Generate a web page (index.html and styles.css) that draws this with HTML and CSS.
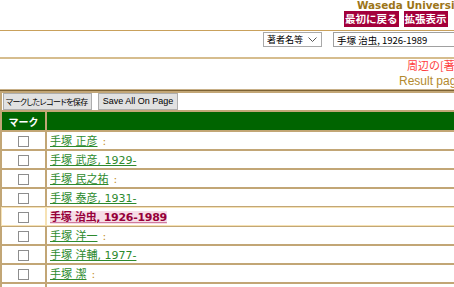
FILE: index.html
```html
<!DOCTYPE html>
<html lang="ja">
<head>
    <meta charset="UTF-8">
    <title>Waseda University Library - 著者名等 周辺リスト</title>
    <link rel="stylesheet" href="styles.css">
</head>
<body>

    <!-- Header -->
    <div class="brand">Waseda University Library</div>
    <div class="nav">
        <a class="nav-btn" href="#">最初に戻る</a>
        <a class="nav-btn" href="#">拡張表示</a>
    </div>
    <div class="rule"></div>

    <!-- Browse form -->
    <form class="search">
        <span class="select-box">
            <select class="field-select">
                <option>著者名等</option>
            </select>
            <svg class="chevron" width="9" height="6" viewBox="0 0 9 6">
                <path d="M0.5 0.5 L4.5 4.5 L8.5 0.5" fill="none" stroke="#555" stroke-width="1"/>
            </svg>
        </span>
        <input class="field-input" type="text" value="手塚 治虫, 1926-1989">
    </form>
    <div class="rule rule-thick"></div>

    <div class="neighbors">周辺の[著者名等]リスト</div>
    <div class="result-page">Result page: 前ページ 次ページ</div>
    <div class="rule rule-table"></div>

    <!-- Results -->
    <table class="results">
        <tr class="tools">
            <td colspan="2">
                <button class="tool-btn tool-jp">マークしたレコードを保存</button>
                <button class="tool-btn">Save All On Page</button>
            </td>
        </tr>
        <tr class="head">
            <th class="mark">マーク</th>
            <th></th>
        </tr>
        <tr>
            <td class="mark"><input type="checkbox"></td>
            <td><a href="#">手塚 正彦</a> <span class="colon">:</span></td>
        </tr>
        <tr>
            <td class="mark"><input type="checkbox"></td>
            <td><a href="#">手塚 武彦, 1929-</a></td>
        </tr>
        <tr>
            <td class="mark"><input type="checkbox"></td>
            <td><a href="#">手塚 民之祐</a> <span class="colon">:</span></td>
        </tr>
        <tr>
            <td class="mark"><input type="checkbox"></td>
            <td><a href="#">手塚 泰彦, 1931-</a></td>
        </tr>
        <tr class="current">
            <td class="mark"><input type="checkbox"></td>
            <td><a href="#">手塚 治虫, 1926-1989</a></td>
        </tr>
        <tr>
            <td class="mark"><input type="checkbox"></td>
            <td><a href="#">手塚 洋一</a> <span class="colon">:</span></td>
        </tr>
        <tr>
            <td class="mark"><input type="checkbox"></td>
            <td><a href="#">手塚 洋輔, 1977-</a></td>
        </tr>
        <tr>
            <td class="mark"><input type="checkbox"></td>
            <td><a href="#">手塚 潔</a> <span class="colon">:</span></td>
        </tr>
        <tr>
            <td class="mark"><input type="checkbox"></td>
            <td><a href="#">手塚 理恵</a> <span class="colon">:</span></td>
        </tr>
    </table>

</body>
</html>
```

FILE: styles.css
```css
html {
    overflow: hidden;
}

body {
    font-family: "DejaVu Sans", Verdana, "Noto Sans CJK JP", sans-serif;
    background-color: #fff;
    margin: 0;
    width: 720px;
}

.brand {
    margin-left: 357px;
    font-size: 10.4px;
    font-weight: bold;
    line-height: 10px;
    height: 11px;
    color: #9c7518;
    white-space: nowrap;
}

.nav {
    display: flex;
    gap: 5px;
    margin-left: 344px;
    height: 16px;
}

.nav-btn {
    display: block;
    height: 16px;
    padding: 0 1px;
    background-color: #a3003b;
    color: #fff;
    font-family: "Noto Sans CJK JP", sans-serif;
    font-size: 10.5px;
    font-weight: bold;
    line-height: 16px;
    text-decoration: none;
    white-space: nowrap;
}

.rule {
    height: 1px;
    background-color: #c9a15c;
    margin-top: 3px;
}

.rule-thick {
    height: 2px;
    background-color: #d6bd8e;
    margin-top: 10px;
}

.rule-table {
    background-color: #c8b088;
    margin-top: 1px;
}

.search {
    display: flex;
    gap: 11px;
    margin: 1px 0 0 263px;
}

.select-box {
    position: relative;
    display: block;
}

.field-select {
    display: block;
    width: 59px;
    height: 15px;
    padding: 0 0 0 3px;
    border: 1px solid #a9a9a9;
    border-radius: 0;
    background-color: #fff;
    font-family: "Noto Sans CJK JP", sans-serif;
    font-size: 9px;
    appearance: none;
    -webkit-appearance: none;
}

.chevron {
    position: absolute;
    right: 5px;
    top: 5px;
}

.field-input {
    width: 220px;
    height: 15px;
    box-sizing: border-box;
    padding: 0 3px;
    border: 1px solid #a0a0a0;
    font-family: "Noto Sans CJK JP", sans-serif;
    font-size: 9.5px;
}

.neighbors {
    margin-left: 407px;
    height: 13px;
    font-family: "Noto Sans CJK JP", sans-serif;
    font-size: 11px;
    line-height: 12px;
    color: #ff3d3d;
    white-space: nowrap;
}

.result-page {
    margin: 3px 0 0 399px;
    height: 13px;
    font-family: "Liberation Sans", Arial, sans-serif;
    font-size: 12px;
    line-height: 13px;
    color: #b38a2e;
    white-space: nowrap;
}

.results {
    width: 720px;
    border-spacing: 2px;
    background-color: #c2a676;
    border-top: 1px solid #7d6233;
}

.results td, .results th {
    padding: 0 3px;
    height: 17px;
    line-height: 15px;
    background-color: #fff;
    text-align: left;
    white-space: nowrap;
}

.results .mark {
    width: 37px;
    text-align: center;
}

.tools td {
    padding: 0 1px;
    height: 17px;
}

.tool-btn {
    height: 17px;
    margin: 0 1px 0 0;
    padding: 0 4px;
    border: 1px solid #adadad;
    background-color: #e1e1e1;
    color: #000;
    font-family: "Liberation Sans", Arial, sans-serif;
    font-size: 9px;
    line-height: 15px;
    vertical-align: top;
}

.tool-jp {
    font-family: "Noto Sans CJK JP", sans-serif;
    font-size: 8px;
    font-feature-settings: "palt";
    letter-spacing: -0.6px;
    padding: 0 3px 0 2px;
}

.head th {
    height: 18px;
    background-color: #006400;
    color: #fff;
    font-family: "Noto Sans CJK JP", sans-serif;
    font-size: 10px;
    font-weight: bold;
}

.results input[type="checkbox"] {
    appearance: none;
    -webkit-appearance: none;
    display: inline-block;
    width: 11px;
    height: 11px;
    margin: 0;
    border: 1px solid #8d8d8d;
    background-color: #fff;
    vertical-align: middle;
}

.results a {
    color: #2d8a2d;
    font-size: 11px;
    text-decoration: underline;
}

.colon {
    color: #c08a2a;
    font-size: 11px;
}

.current td {
    outline: 1px solid #f6e2b4;
}

.current a {
    color: #96003a;
    font-weight: bold;
    letter-spacing: -0.3px;
    background-color: #f6dde6;
    text-decoration-color: #d07a9c;
}
```
